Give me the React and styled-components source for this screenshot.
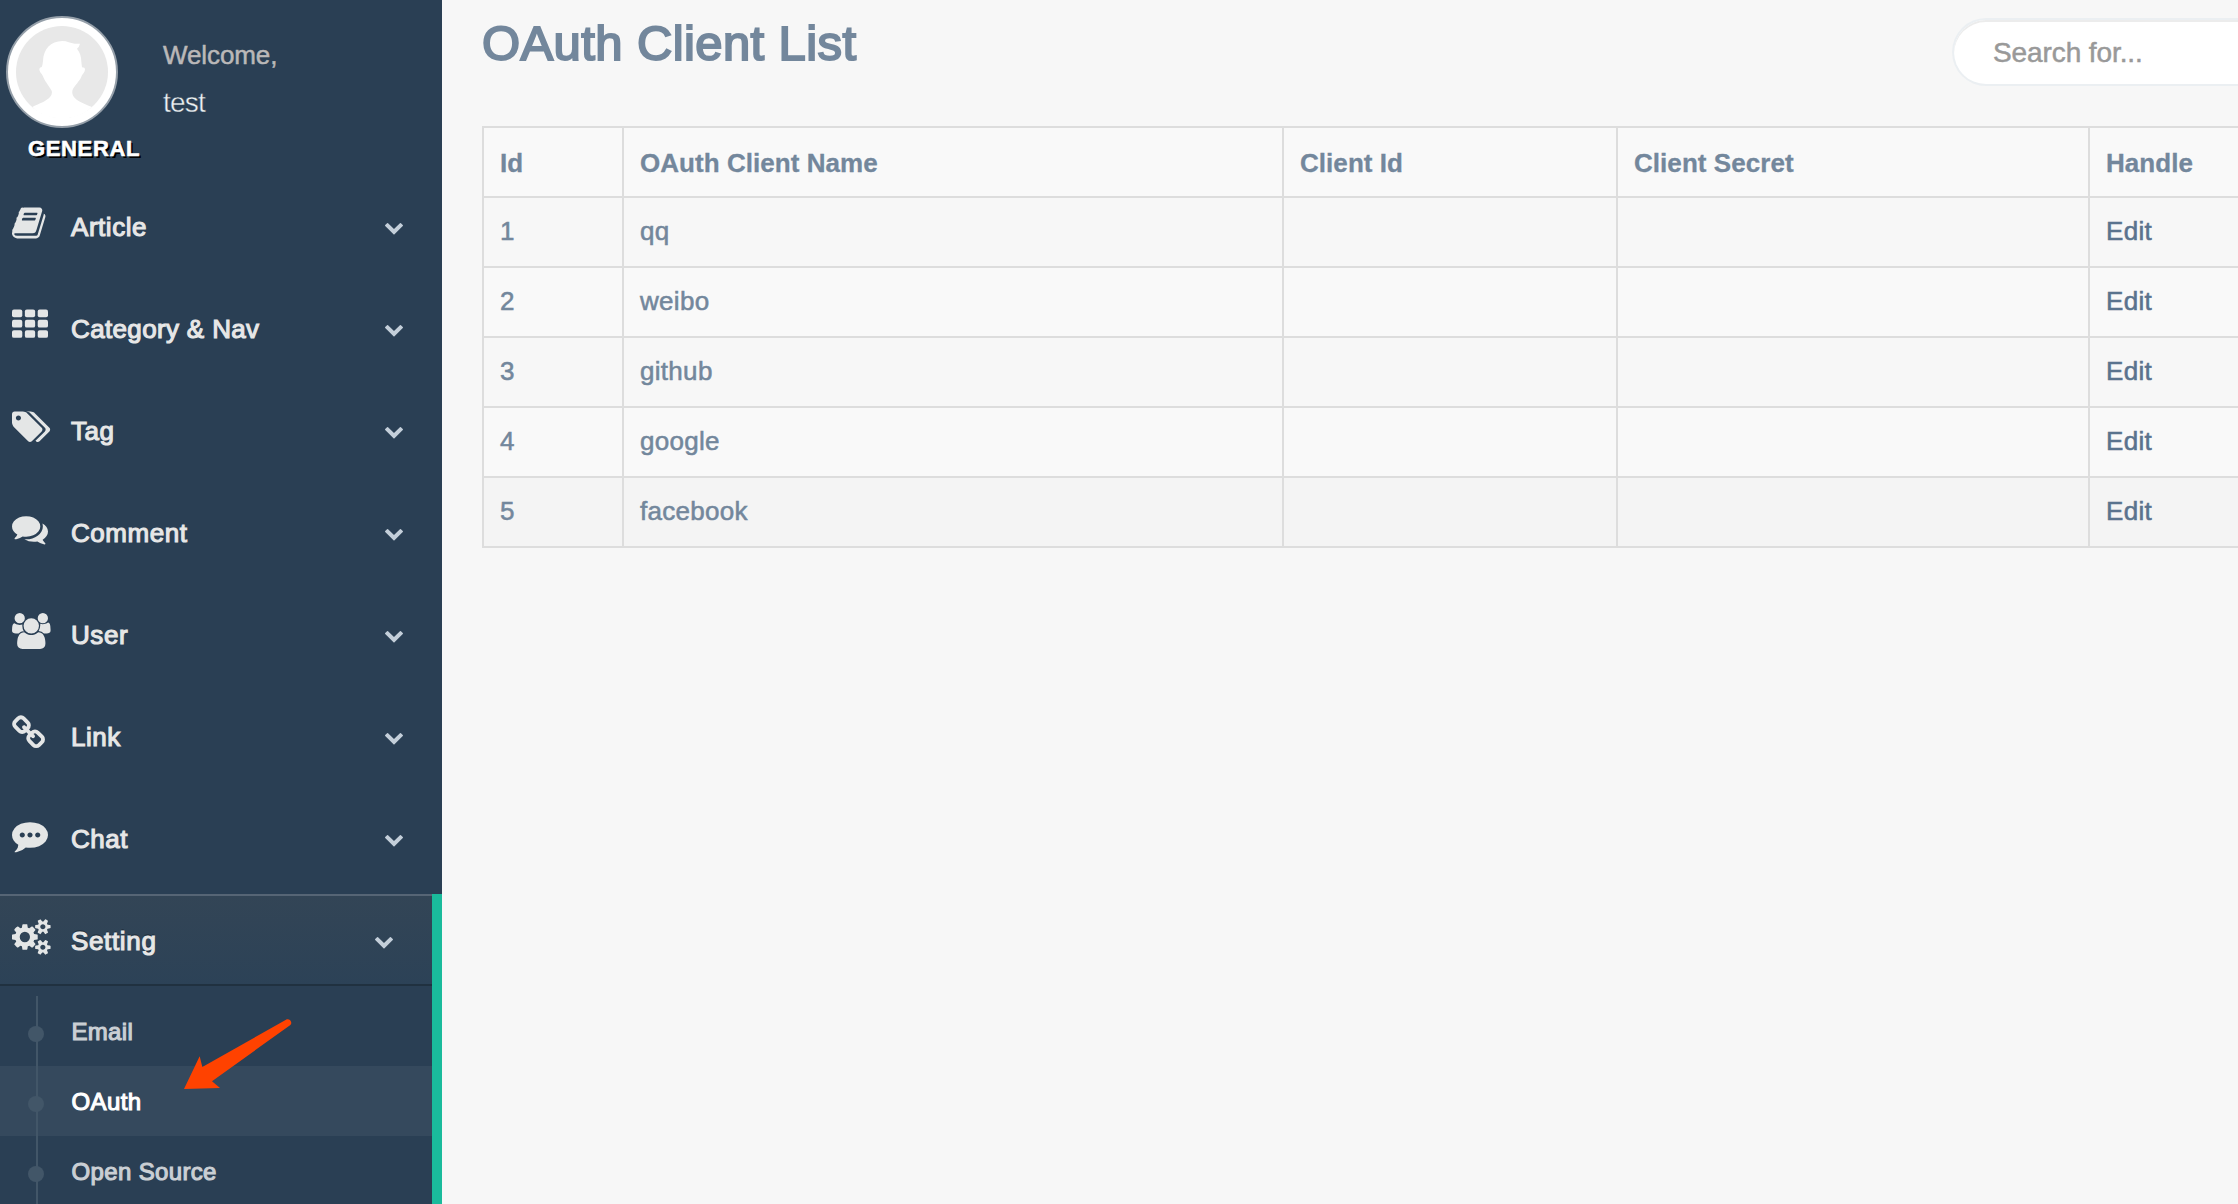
import React from "react";
import styled, { createGlobalStyle, css } from "styled-components";

const GlobalStyle = createGlobalStyle`
  *, *::before, *::after { box-sizing: border-box; }
  html, body { margin: 0; padding: 0; height: 100%; overflow: hidden; }
  body {
    background: #f7f7f7;
    color: #73879c;
    font-family: "Liberation Sans", Arial, sans-serif;
    font-size: 26px;
  }
`;

const medium = css`
  -webkit-text-stroke: 1.1px currentColor;
`;

const Layout = styled.div`
  display: flex;
  height: 1204px;
  overflow: hidden;
`;

const Sidebar = styled.aside`
  position: relative;
  flex: 0 0 442px;
  height: 1204px;
  overflow: hidden;
  background: #2a3f54;
`;

const Profile = styled.div`
  display: flex;
  height: 128px;
  padding: 16px 0 0 6px;
`;

const Avatar = styled.div`
  width: 112px;
  height: 112px;
  padding: 8px;
  border: 2px solid #959fa9;
  border-radius: 50%;
  background: #fff;

  svg {
    display: block;
    width: 92px;
    height: 92px;
  }
`;

const Greeting = styled.div`
  display: flex;
  flex-direction: column;
  padding: 18px 0 0 45px;
`;

const Welcome = styled.span`
  line-height: 42px;
  color: #bab8b8;
  letter-spacing: -0.1px;
  -webkit-text-stroke: 0.5px currentColor;
`;

const UserName = styled.span`
  margin-top: 7px;
  font-size: 28px;
  font-weight: 300;
  line-height: 40px;
  color: #ecf0f1;
  letter-spacing: -0.8px;
  -webkit-text-stroke: 0.4px #2a3f54;
`;

const SectionTitle = styled.h3`
  margin: 0;
  padding-left: 28px;
  height: 52px;
  font-size: 22px;
  font-weight: bold;
  line-height: 41px;
  color: #fff;
  letter-spacing: 0.65px;
  text-shadow: 2px 2px #000;
  -webkit-text-stroke: 0.6px #fff;
`;

const Item = styled.div`
  height: ${(p) => (p.$active ? "310px" : "92px")};
  margin-bottom: 10px;
  border-right: ${(p) => (p.$active ? "10px solid #1abb9c" : "0")};
`;

const ItemLink = styled.div`
  display: flex;
  align-items: flex-start;
  height: 92px;
  padding-right: 38px;
  padding-left: 12px;
  color: #e7e7e7;
  ${(p) =>
    p.$active &&
    css`
      background: linear-gradient(#334556, #2c4257);
      box-shadow: inset 0 2px 0 #566575, inset 0 -2px 0 #203140;
      text-shadow: 0 -2px 0 rgba(0, 0, 0, 0.25);
    `}
`;

const IconBox = styled.span`
  flex: 0 0 59px;
  padding-top: 25px;

  svg {
    display: block;
    height: 36px;
    fill: #e4e6e6;
  }
`;

const ItemLabel = styled.span`
  flex: 1;
  line-height: 94px;
  letter-spacing: ${(p) => p.$track || "0.55px"};
  ${medium}
`;

const Chevron = styled.svg`
  width: 20px;
  height: 20px;
  margin-top: 37px;
  fill: #c4cfda;
`;

const SubMenu = styled.ul`
  margin: 10px 0 0;
  padding: 0;
  list-style: none;
`;

const SubItem = styled.li`
  position: relative;
  height: 70px;
  padding-left: 71.5px;
  font-size: 24px;
  line-height: 71px;
  letter-spacing: ${(p) => p.$track};
  color: ${(p) => (p.$current ? "#fff" : "#cacfd4")};
  background: ${(p) => (p.$current ? "#35495d" : "transparent")};
  ${medium}

  &::before {
    content: "";
    position: absolute;
    top: 30px;
    left: 28px;
    width: 16px;
    height: 16px;
    border-radius: 50%;
    background: #425668;
  }

  &::after {
    content: "";
    position: absolute;
    top: 0;
    bottom: 0;
    left: 36px;
    width: 2px;
    background: #425668;
  }
`;

const Pointer = styled.svg`
  position: absolute;
  top: 1018px;
  left: 182px;
  width: 112px;
  height: 74px;
  fill: #ff4200;
`;

const Main = styled.main`
  flex: 1;
  min-width: 0;
  padding-left: 40px;
  overflow: hidden;
`;

const PageHeader = styled.header`
  display: flex;
  justify-content: space-between;
  height: 126px;
`;

const Title = styled.h1`
  margin: 0;
  font-size: 49px;
  font-weight: normal;
  line-height: 87px;
  letter-spacing: 0.4px;
  -webkit-text-stroke: 2px currentColor;
`;

const SearchBox = styled.div`
  width: 286px;
  height: 68px;
  margin-top: 18px;
  padding-left: 39px;
  border: 2px solid #ebeff2;
  border-right: 0;
  border-radius: 34px 0 0 34px;
  background: #fff;
  box-shadow: inset 0 2px 0 #ececec;
  font-size: 28px;
  line-height: 65px;
  letter-spacing: -0.1px;
  color: #999;
  -webkit-text-stroke: 0.5px currentColor;
`;

const Table = styled.table`
  width: 1806px;
  table-layout: fixed;
  border-collapse: collapse;
`;

const Row = styled.tr`
  height: 70px;
  background: ${(p) => p.$bg};
`;

const HeadCell = styled.th`
  width: ${(p) => p.$width}px;
  padding: 2px 16px 0;
  border: 2px solid #ddd;
  line-height: 38px;
  text-align: left;
  letter-spacing: 0.05px;
  -webkit-text-stroke: 0.3px currentColor;
`;

const Cell = styled.td`
  padding: 0 16px 2px;
  border: 2px solid #ddd;
  line-height: 38px;
  color: ${(p) => (p.$link ? "#5a738e" : "#73879c")};
  letter-spacing: 0.3px;
  -webkit-text-stroke: 0.55px currentColor;
`;

const icons = {
  book: {
    box: "64 0 1792 1792",
    d: "M1703 478q40 57 18 129l-275 906q-19 64-76.5 107.5t-122.5 43.5h-923q-77 0-148.5-53.5t-99.5-131.5q-24-67-2-127 0-4 3-27t4-37q1-8-3-21.5t-3-19.5q2-11 8-21t16.5-23.5 16.5-23.5q23-38 45-91.5t30-91.5q3-10 .5-30t-.5-28q3-11 17-28t17-23q21-36 42-92t25-90q1-9-2.5-32t.5-28q4-13 22-30.5t22-22.5q19-26 42.5-84.5t27.5-96.5q1-8-3-25.5t-2-26.5q2-8 9-18t18-23 17-21q8-12 16.5-30.5t15-35 16-36 19.5-32 26.5-23.5 36-11.5 47.5 5.5l-1 3q38-9 51-9h761q74 0 114 56t18 130l-274 906q-36 119-71.5 153.5t-128.5 34.5h-869q-27 0-38 15-11 16-1 43 24 70 144 70h923q29 0 56-15.5t35-41.5l300-987q7-22 5-57 38 15 59 43zm-1064 2q-4 13 2 22.5t20 9.5h608q13 0 25.5-9.5t16.5-22.5l21-64q4-13-2-22.5t-20-9.5h-608q-13 0-25.5 9.5t-16.5 22.5zm-83 256q-4 13 2 22.5t20 9.5h608q13 0 25.5-9.5t16.5-22.5l21-64q4-13-2-22.5t-20-9.5h-608q-13 0-25.5 9.5t-16.5 22.5z",
  },
  tags: {
    box: "0 0 1920 1792",
    d: "M448 448q0-53-37.5-90.5t-90.5-37.5-90.5 37.5-37.5 90.5 37.5 90.5 90.5 37.5 90.5-37.5 37.5-90.5zm1067 576q0 53-37 90l-491 492q-39 37-91 37-53 0-90-37l-715-716q-38-37-64.5-101t-26.5-117v-416q0-52 38-90t90-38h416q53 0 117 26.5t102 64.5l715 714q37 39 37 91zm384 0q0 53-37 90l-491 492q-39 37-91 37-36 0-59-14t-53-45l470-470q37-37 37-90 0-52-37-91l-715-714q-38-38-102-64.5t-117-26.5h224q53 0 117 26.5t102 64.5l715 714q37 39 37 91z",
  },
  comments: {
    box: "0 0 1792 1792",
    d: "M1408 768q0 139-94 257t-256.5 186.5-353.5 68.5q-86 0-176-16-124 88-278 128-36 9-86 16h-3q-11 0-20.5-8t-11.5-21q-1-3-1-6.5t.5-6.5 2-6l2.5-5 3.5-5.5 4-5 4.5-5 4-4.5q5-6 23-25t26-29.5 22.5-29 25-38.5 20.5-44q-124-72-195-177t-71-224q0-139 94-257t256.5-186.5 353.5-68.5 353.5 68.5 256.5 186.5 94 257zm384 256q0 120-71 224.5t-195 176.5q10 24 20.5 44t25 38.5 22.5 29 26 29.5 23 25q1 1 4 4.5t4.5 5 4 5 3.5 5.5l2.5 5 2 6 .5 6.5-1 6.5q-3 14-13 22t-22 7q-50-7-86-16-154-40-278-128-90 16-176 16-271 0-472-132 58 4 88 4 161 0 309-45t264-129q125-92 192-212t67-254q0-77-23-152 129 71 204 178t75 230z",
  },
  users: {
    box: "64 0 1920 1792",
    d: "M657 896q-162 5-265 128h-134q-82 0-138-40.5t-56-118.5q0-353 124-353 6 0 43.5 21t97.5 42.5 119 21.5q67 0 133-23-5 37-5 66 0 159 81 293zm1071 637q0 120-73 189.5t-194 69.5h-874q-121 0-194-69.5t-73-189.5q0-53 3.5-103.5t14-109 26.5-108.5 43-97.5 62-81 85.5-53.5 111.5-20q10 0 43 21.5t73 48 107 48 135 21.5 135-21.5 107-48 73-48 43-21.5q61 0 111.5 20t85.5 53.5 62 81 43 97.5 26.5 108.5 14 109 3.5 103.5zm-1024-1277q0 106-75 181t-181 75-181-75-75-181 75-181 181-75 181 75 75 181zm704 384q0 159-112.5 271.5t-271.5 112.5-271.5-112.5-112.5-271.5 112.5-271.5 271.5-112.5 271.5 112.5 112.5 271.5zm576 225q0 78-56 118.5t-138 40.5h-134q-103-123-265-128 81-134 81-293 0-29-5-66 66 23 133 23 59 0 119-21.5t97.5-42.5 43.5-21q124 0 124 353zm-128-609q0 106-75 181t-181 75-181-75-75-181 75-181 181-75 181 75 75 181z",
  },
  link: {
    box: "72 0 1792 1792",
    d: "M1520 1216q0-40-28-68l-208-208q-28-28-68-28-42 0-72 32 3 3 19 18.5t21.5 21.5 15 19 13 25.5 3.5 27.5q0 40-28 68t-68 28q-15 0-27.5-3.5t-25.5-13-19-15-21.5-21.5-18.5-19q-33 31-33 73 0 40 28 68l206 207q27 27 68 27 40 0 68-26l147-146q28-28 28-67zm-703-705q0-40-28-68l-206-207q-28-28-68-28-39 0-68 27l-147 146q-28 28-28 67 0 40 28 68l208 208q27 27 68 27 42 0 72-31-3-3-19-18.5t-21.5-21.5-15-19-13-25.5-3.5-27.5q0-40 28-68t68-28q15 0 27.5 3.5t25.5 13 19 15 21.5 21.5 18.5 19q33-31 33-73zm895 705q0 120-85 203l-147 146q-83 83-203 83-121 0-204-85l-206-207q-83-83-83-203 0-123 88-209l-88-88q-86 88-208 88-120 0-204-84l-208-208q-84-84-84-204t85-203l147-146q83-83 203-83 121 0 204 85l206 207q83 83 83 203 0 123-88 209l88 88q86-88 208-88 120 0 204 84l208 208q84 84 84 204z",
  },
  chat: {
    box: "0 0 1792 1792",
    d: "M640 896q0-53-37.5-90.5t-90.5-37.5-90.5 37.5-37.5 90.5 37.5 90.5 90.5 37.5 90.5-37.5 37.5-90.5zm384 0q0-53-37.5-90.5t-90.5-37.5-90.5 37.5-37.5 90.5 37.5 90.5 90.5 37.5 90.5-37.5 37.5-90.5zm384 0q0-53-37.5-90.5t-90.5-37.5-90.5 37.5-37.5 90.5 37.5 90.5 90.5 37.5 90.5-37.5 37.5-90.5zm384 0q0 174-120 321.5t-326 233-450 85.5q-110 0-211-18-173 173-435 229-52 10-86 13-12 1-22-6t-13-18q-4-15 20-37 5-5 23.5-21.5t25.5-23.5 23.5-25.5 24-31.5 20.5-37 20-48 14.5-57.5 12.5-72.5q-146-90-229.5-216.5t-83.5-269.5q0-174 120-321.5t326-233 450-85.5 450 85.5 326 233 120 321.5z",
  },
  cogs: {
    box: "0 0 1920 1792",
    d: "M896 896q0-106-75-181t-181-75-181 75-75 181 75 181 181 75 181-75 75-181zm768 512q0-52-38-90t-90-38-90 38-38 90q0 53 37.5 90.5t90.5 37.5 90.5-37.5 37.5-90.5zm0-1024q0-52-38-90t-90-38-90 38-38 90q0 53 37.5 90.5t90.5 37.5 90.5-37.5 37.5-90.5zm-384 421v185q0 10-7 19.5t-16 10.5l-155 24q-11 35-32 76 34 48 90 115 7 11 7 20 0 12-7 19-23 30-82.5 89.5t-78.5 59.5q-11 0-21-7l-115-90q-37 19-77 31-11 108-23 155-7 24-30 24h-186q-11 0-20-7.5t-10-17.5l-23-153q-34-10-75-31l-118 89q-7 7-20 7-11 0-21-8-144-133-144-160 0-9 7-19 10-14 41-53t47-61q-23-44-35-82l-152-24q-10-1-17-9.5t-7-19.5v-185q0-10 7-19.5t16-10.5l155-24q11-35 32-76-34-48-90-115-7-11-7-20 0-12 7-20 22-30 82-89t79-59q11 0 21 7l115 90q34-18 77-32 11-108 23-154 7-24 30-24h186q11 0 20 7.5t10 17.5l23 153q34 10 75 31l118-89q8-7 20-7 11 0 21 8 144 133 144 160 0 8-7 19-12 16-42 54t-45 60q23 48 34 82l152 23q10 2 17 10.5t7 19.5zm640 533v140q0 16-149 31-12 27-30 52 51 113 51 138 0 4-4 7-122 71-124 71-8 0-46-47t-52-68q-20 2-30 2t-30-2q-14 21-52 68t-46 47q-2 0-124-71-4-3-4-7 0-25 51-138-18-25-30-52-149-15-149-31v-140q0-16 149-31 13-29 30-52-51-113-51-138 0-4 4-7 4-2 35-20t59-34 30-16q8 0 46 46.5t52 67.5q20-2 30-2t30 2q51-71 92-112l6-2q4 0 124 70 4 3 4 7 0 25-51 138 17 23 30 52 149 15 149 31zm0-1024v140q0 16-149 31-12 27-30 52 51 113 51 138 0 4-4 7-122 71-124 71-8 0-46-47t-52-68q-20 2-30 2t-30-2q-14 21-52 68t-46 47q-2 0-124-71-4-3-4-7 0-25 51-138-18-25-30-52-149-15-149-31v-140q0-16 149-31 13-29 30-52-51-113-51-138 0-4 4-7 4-2 35-20t59-34 30-16q8 0 46 46.5t52 67.5q20-2 30-2t30 2q51-71 92-112l6-2q4 0 124 70 4 3 4 7 0 25-51 138 17 23 30 52 149 15 149 31z",
  },
};

function MenuIcon({ name }) {
  if (name === "grid") {
    return (
      <svg viewBox="0 0 1792 1792">
        {[128, 640, 1152].map((y) =>
          [0, 640, 1280].map((x) => (
            <rect key={`${x}-${y}`} x={x} y={y} width="512" height="384" rx="96" />
          ))
        )}
      </svg>
    );
  }
  const icon = icons[name];
  return (
    <svg viewBox={icon.box}>
      <path d={icon.d} />
    </svg>
  );
}

function MenuEntry({ icon, label, track, active, children }) {
  return (
    <Item $active={active}>
      <ItemLink $active={active}>
        <IconBox>
          <MenuIcon name={icon} />
        </IconBox>
        <ItemLabel $track={track}>{label}</ItemLabel>
        <Chevron viewBox="0 0 1792 1792">
          <path d="M1683 808l-742 741q-19 19-45 19t-45-19l-742-741q-19-19-19-45.5t19-45.5l166-165q19-19 45-19t45 19l531 531 531-531q19-19 45-19t45 19l166 165q19 19 19 45.5t-19 45.5z" />
        </Chevron>
      </ItemLink>
      {children}
    </Item>
  );
}

const menu = [
  { icon: "book", label: "Article" },
  { icon: "grid", label: "Category & Nav", track: "0.35px" },
  { icon: "tags", label: "Tag" },
  { icon: "comments", label: "Comment" },
  { icon: "users", label: "User" },
  { icon: "link", label: "Link" },
  { icon: "chat", label: "Chat" },
];

const clients = ["qq", "weibo", "github", "google", "facebook"];
const rowColors = ["#f7f7f7", "#f9f9f9", "#f7f7f7", "#f9f9f9", "#f4f4f4"];

export default function App() {
  return (
    <>
      <GlobalStyle />
      <Layout>
        <Sidebar>
          <Profile>
            <Avatar>
              <svg viewBox="48 78 276 276">
                <circle cx="186" cy="216" r="138" fill="#e8e8e8" />
                <path
                  fill="#fff"
                  d="M97 321C115 312 140 303 150 291Q158 282 155 272C147 258 135 245 130 232C127 221 119 219 118 208Q118 202 125 201Q128 195 129 183C130 148 152 123 187 123C202 123 210 130 224 131Q234 131 240 131Q238 140 231 146C240 157 244 170 244 185L246 202Q255 202 255 209C254 218 249 219 245 228Q242 238 234 246C228 256 215 265 217 280C218 298 250 312 276 321C250 345 220 355 186 355C150 355 118 343 97 321Z"
                />
              </svg>
            </Avatar>
            <Greeting>
              <Welcome>Welcome,</Welcome>
              <UserName>test</UserName>
            </Greeting>
          </Profile>
          <SectionTitle>GENERAL</SectionTitle>
          {menu.map((m) => (
            <MenuEntry key={m.label} {...m} />
          ))}
          <MenuEntry icon="cogs" label="Setting" track="0.65px" active>
            <SubMenu>
              <SubItem $track="0.3px">Email</SubItem>
              <SubItem $track="0.4px" $current>
                OAuth
              </SubItem>
              <SubItem $track="0.35px">Open Source</SubItem>
            </SubMenu>
          </MenuEntry>
          <Pointer viewBox="546 414 336 222">
            <path d="M552 627L599 529L607 561L858 419C866 414 877 423 873 432Q872 435 868 437L636 604L660 624Z" />
          </Pointer>
        </Sidebar>
        <Main>
          <PageHeader>
            <Title>OAuth Client List</Title>
            <SearchBox>Search for...</SearchBox>
          </PageHeader>
          <Table>
            <thead>
              <Row $bg="#f9f9f9">
                <HeadCell $width={140}>Id</HeadCell>
                <HeadCell $width={660}>OAuth Client Name</HeadCell>
                <HeadCell $width={334}>Client Id</HeadCell>
                <HeadCell $width={472}>Client Secret</HeadCell>
                <HeadCell $width={198}>Handle</HeadCell>
              </Row>
            </thead>
            <tbody>
              {clients.map((name, i) => (
                <Row key={name} $bg={rowColors[i]}>
                  <Cell>{i + 1}</Cell>
                  <Cell>{name}</Cell>
                  <Cell />
                  <Cell />
                  <Cell $link>Edit</Cell>
                </Row>
              ))}
            </tbody>
          </Table>
        </Main>
      </Layout>
    </>
  );
}
